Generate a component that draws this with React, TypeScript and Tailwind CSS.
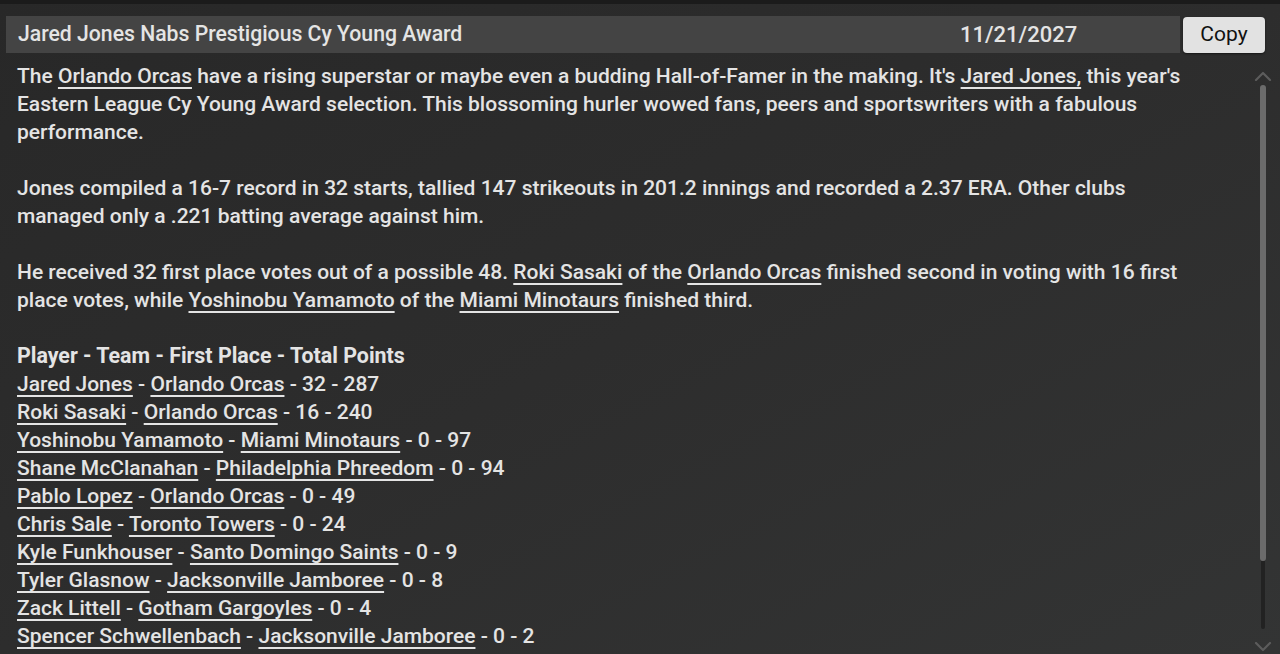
import { Fragment } from 'react'

type Row = { player: string; team: string; first: number; points: number }

const rows: Row[] = [
  { player: 'Jared Jones', team: 'Orlando Orcas', first: 32, points: 287 },
  { player: 'Roki Sasaki', team: 'Orlando Orcas', first: 16, points: 240 },
  { player: 'Yoshinobu Yamamoto', team: 'Miami Minotaurs', first: 0, points: 97 },
  { player: 'Shane McClanahan', team: 'Philadelphia Phreedom', first: 0, points: 94 },
  { player: 'Pablo Lopez', team: 'Orlando Orcas', first: 0, points: 49 },
  { player: 'Chris Sale', team: 'Toronto Towers', first: 0, points: 24 },
  { player: 'Kyle Funkhouser', team: 'Santo Domingo Saints', first: 0, points: 9 },
  { player: 'Tyler Glasnow', team: 'Jacksonville Jamboree', first: 0, points: 8 },
  { player: 'Zack Littell', team: 'Gotham Gargoyles', first: 0, points: 4 },
  { player: 'Spencer Schwellenbach', team: 'Jacksonville Jamboree', first: 0, points: 2 },
]

function L({ children }: { children: React.ReactNode }) {
  return (
    <a className="underline decoration-2 underline-offset-[4px] [text-decoration-skip-ink:none] cursor-pointer">{children}</a>
  )
}

function Chevron({ up }: { up?: boolean }) {
  return (
    <svg width="18" height="10" viewBox="0 0 18 10" className="text-[#5c5c5c]">
      <path
        d={up ? 'M2 9 L9 2 L16 9' : 'M2 1 L9 8 L16 1'}
        fill="none"
        stroke="currentColor"
        strokeWidth="2.2"
        strokeLinecap="round"
        strokeLinejoin="round"
      />
    </svg>
  )
}

export default function App() {
  return (
    <div
      className="w-[1280px] h-[654px] overflow-hidden bg-[#1b1b1b] pt-[4px] text-[#e4e4e4]"
      style={{ fontFamily: 'Roboto, "Liberation Sans", sans-serif' }}
    >
      <div className="h-full flex flex-col bg-gradient-to-br from-[#282828] via-[#2d2d2d] to-[#333434]">
        <div className="flex items-center gap-[3px] pl-[6px] pr-[15px] pt-[11px]">
          <div className="flex-1 h-[37px] bg-[#444444] flex items-center pl-[12px] font-medium">
            <span className="flex-1 text-[21.2px]">Jared Jones Nabs Prestigious Cy Young Award</span>
            <span className="w-[220px] text-[22px]">11/21/2027</span>
          </div>
          <button className="w-[82px] h-[36px] mt-[2px] rounded-[4px] bg-[#e2e2e2] text-[#111] text-[21px] shadow-[0_1px_2px_rgba(0,0,0,0.5)]">
            Copy
          </button>
        </div>

        <div className="flex flex-1 min-h-0">
          <div className="flex-1 pl-[17px] pt-[9px] pr-[35px] text-[21px] font-medium leading-[28px]">
            <p>
              The <L>Orlando Orcas</L> have a rising superstar or maybe even a budding Hall-of-Famer in the making. It's{' '}
              <L>Jared Jones,</L> this year's Eastern League Cy Young Award selection. This blossoming hurler wowed fans, peers and
              sportswriters with a fabulous performance.
            </p>
            <p className="mt-[28px]">
              Jones compiled a 16-7 record in 32 starts, tallied 147 strikeouts in 201.2 innings and recorded a 2.37 ERA. Other clubs
              managed only a .221 batting average against him.
            </p>
            <p className="mt-[28px]">
              He received 32 first place votes out of a possible 48. <L>Roki Sasaki</L> of the <L>Orlando Orcas</L> finished second in
              voting with 16 first place votes, while <L>Yoshinobu Yamamoto</L> of the <L>Miami Minotaurs</L> finished third.
            </p>
            <p className="mt-[28px] font-bold text-[21.4px]">Player - Team - First Place - Total Points</p>
            {rows.map((r) => (
              <Fragment key={r.player}>
                <p>
                  <L>{r.player}</L> - <L>{r.team}</L> - {r.first} - {r.points}
                </p>
              </Fragment>
            ))}
          </div>

          <div className="w-[30px] flex flex-col items-center pt-[18px] pr-[4px]">
            <Chevron up />
            <div className="mt-[4px] w-[6px] flex-1 flex flex-col items-center">
              <div className="w-[6px] h-[476px] rounded-full bg-[#6b6b6b]" />
              <div className="w-[4px] h-[68px] bg-[#222222] rounded-b-full" />
            </div>
            <div className="pb-[2px] pt-[6px]">
              <Chevron />
            </div>
          </div>
        </div>
      </div>
    </div>
  )
}
